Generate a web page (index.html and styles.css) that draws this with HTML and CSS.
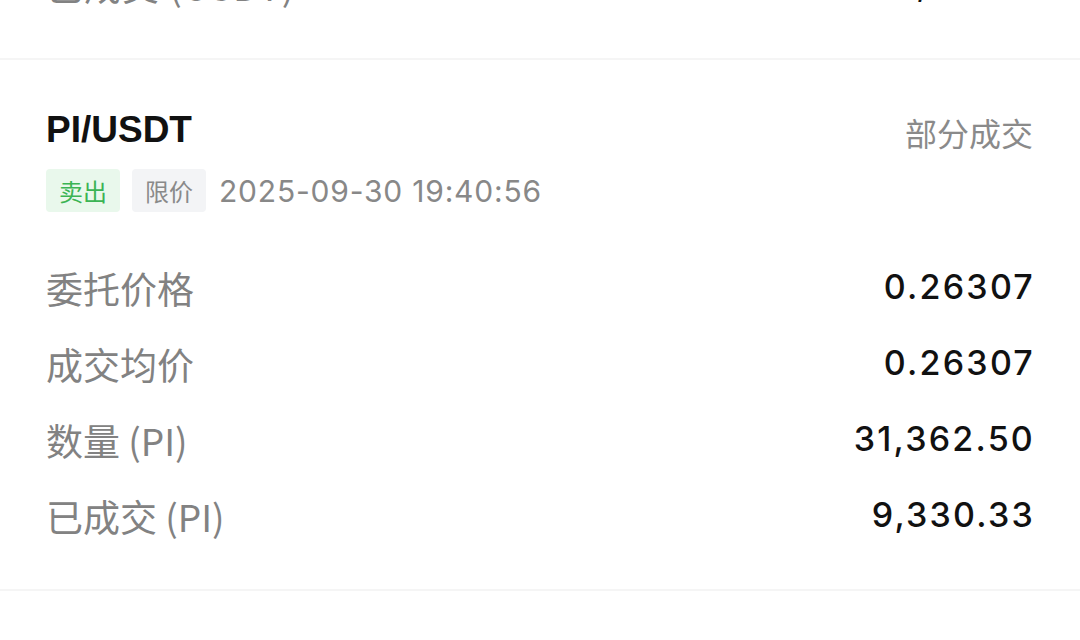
FILE: index.html
```html
<!DOCTYPE html>
<html lang="zh-CN">
<head>
<meta charset="utf-8">
<title>订单</title>
<link rel="stylesheet" href="styles.css">
</head>
<body>
<div class="list">
  <section class="order order--prev">
    <div class="rows">
      <div class="row"><span class="label">已成交 (USDT)</span><span class="value">2,454.6</span></div>
    </div>
  </section>
  <section class="order">
    <header class="head">
      <h2 class="pair">PI/USDT</h2>
      <span class="status">部分成交</span>
    </header>
    <div class="meta">
      <span class="tag tag--sell">卖出</span>
      <span class="tag tag--type">限价</span>
      <span class="time">2025-09-30 19:40:56</span>
    </div>
    <div class="rows">
      <div class="row"><span class="label">委托价格</span><span class="value">0.26307</span></div>
      <div class="row"><span class="label">成交均价</span><span class="value">0.26307</span></div>
      <div class="row"><span class="label">数量 (PI)</span><span class="value">31,362.50</span></div>
      <div class="row"><span class="label">已成交 (PI)</span><span class="value">9,330.33</span></div>
    </div>
  </section>
</div>
</body>
</html>
```

FILE: styles.css
```css
html, body {
  margin: 0;
  padding: 0;
  background: #ffffff;
}
body {
  width: 1080px;
  height: 640px;
  overflow: hidden;
  font-family: "Noto Sans CJK SC", "Noto Sans", sans-serif;
}
.list {
  display: flex;
  flex-direction: column;
}
.order {
  padding: 48px 47px 35px 46px;
  border-bottom: 2px solid #f5f5f5;
}
.order--prev {
  margin-top: -53px;
  padding-top: 0;
}
.head {
  display: flex;
  justify-content: space-between;
  align-items: center;
  height: 44px;
}
.pair {
  margin: 0;
  font-family: "Liberation Sans", Arial, sans-serif;
  font-weight: 700;
  font-size: 37px;
  line-height: 44px;
  color: #111111;
}
.status {
  font-size: 32px;
  line-height: 44px;
  color: #8a8a8a;
  padding-top: 4px;
}
.meta {
  display: flex;
  align-items: center;
  gap: 12px;
  margin-top: 17px;
  height: 43px;
}
.tag {
  height: 43px;
  line-height: 43px;
  padding: 0 13px;
  border-radius: 4px;
  font-size: 24px;
}
.tag--sell {
  background: #e9f8ec;
  color: #3bb454;
}
.tag--type {
  background: #f3f4f6;
  color: #8a8a8a;
}
.time {
  margin-left: 1px;
  font-family: Inter, Roboto, sans-serif;
  font-size: 30px;
  letter-spacing: 0.8px;
  color: #888888;
}
.rows {
  display: flex;
  flex-direction: column;
  margin-top: 38px;
}
.order--prev .rows {
  margin-top: 0;
}
.row {
  display: flex;
  justify-content: space-between;
  align-items: center;
  height: 76px;
}
.label {
  font-size: 37px;
  color: #828282;
}
.order--prev .label {
  letter-spacing: 1px;
}
.value {
  font-family: Inter, Roboto, sans-serif;
  font-weight: 500;
  font-size: 34px;
  letter-spacing: 2.2px;
  margin-right: -2px;
  margin-top: -3px;
  color: #111111;
}
```
